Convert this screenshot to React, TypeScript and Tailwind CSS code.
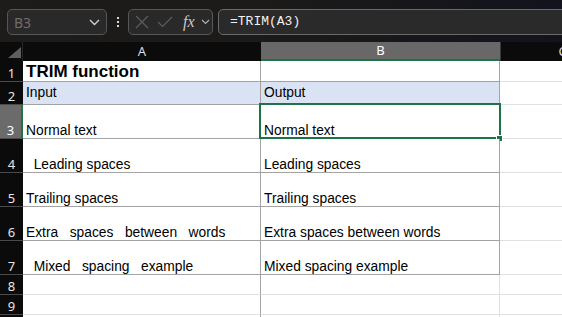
import React from "react";

const G = "border-[#a3a3a3]";
const L = "border-[#e1e1e1]";

type Row = {
  n: number;
  h: string;
  a: string;
  b: string;
  fill?: boolean;
  bold?: boolean;
  pb: string;
  gray: boolean;
};

const rows: Row[] = [
  { n: 1, h: "h-[21px]", a: "TRIM function", b: "", bold: true, pb: "pb-0", gray: true },
  { n: 2, h: "h-[23px]", a: "Input", b: "Output", fill: true, pb: "pb-[4px]", gray: true },
  { n: 3, h: "h-[34px]", a: "Normal text", b: "Normal text", pb: "pb-0", gray: true },
  { n: 4, h: "h-[34px]", a: "  Leading spaces", b: "Leading spaces", pb: "pb-0", gray: true },
  { n: 5, h: "h-[34px]", a: "Trailing spaces   ", b: "Trailing spaces", pb: "pb-0", gray: true },
  { n: 6, h: "h-[34px]", a: "Extra   spaces   between   words", b: "Extra spaces between words", pb: "pb-0", gray: true },
  { n: 7, h: "h-[34px]", a: "  Mixed   spacing   example", b: "Mixed spacing example", pb: "pb-0", gray: true },
  { n: 8, h: "h-[20px]", a: "", b: "", pb: "pb-0", gray: false },
  { n: 9, h: "h-[20px]", a: "", b: "", pb: "pb-0", gray: false },
  { n: 10, h: "h-[20px]", a: "", b: "", pb: "pb-0", gray: false },
];

const cellFont = { fontFamily: '"Liberation Sans", Arial, sans-serif' };
const uiFont = { fontFamily: '"Noto Sans", "Liberation Sans", sans-serif' };

export default function App() {
  return (
    <div className="w-[562px] h-[317px] overflow-hidden bg-white flex flex-col">
      {/* Top formula bar */}
      <div className="h-[42px] shrink-0 flex items-start pt-[9px] pl-[7px] bg-gradient-to-r from-[#1e1c1a] via-[#1b1a19] to-[#12131d] overflow-hidden">
        <div className="w-[100px] h-[26px] shrink-0 rounded-[5px] border border-[#575757] bg-[#292929] flex items-center justify-between pl-[6px] pr-[6px]">
          <span className="text-[14px] text-[#6e6e6e]" style={uiFont}>B3</span>
          <svg width="11" height="7" viewBox="0 0 11 7"><path d="M1 1l4.5 4.5L10 1" fill="none" stroke="#d0d0d0" strokeWidth="1.4" /></svg>
        </div>
        <div className="w-[21px] h-[26px] shrink-0 flex flex-col items-center justify-center gap-[2px]">
          <div className="w-[2px] h-[2px] bg-[#d8d8d8]" />
          <div className="w-[2px] h-[2px] bg-[#d8d8d8]" />
          <div className="w-[2px] h-[2px] bg-[#d8d8d8]" />
        </div>
        <div className="w-[85px] h-[26px] shrink-0 rounded-[5px] border border-[#575757] bg-[#292929] flex items-center pl-[6px]">
          <svg width="14" height="14" viewBox="0 0 14 14" className="shrink-0"><path d="M1 1l12 12M13 1L1 13" stroke="#5c5c5c" strokeWidth="1.2" /></svg>
          <svg width="16" height="12" viewBox="0 0 16 12" className="ml-[8px] shrink-0"><path d="M1 6l4.5 4.5L15 1" fill="none" stroke="#5c5c5c" strokeWidth="1.2" /></svg>
          <span className="ml-[10px] text-[16px] italic text-[#c8c8c8] leading-none" style={{ fontFamily: '"Liberation Serif", "DejaVu Serif", serif' }}>fx</span>
          <svg width="9" height="6" viewBox="0 0 9 6" className="ml-[6px] shrink-0"><path d="M1 1l3.5 3.5L8 1" fill="none" stroke="#b0b0b0" strokeWidth="1.2" /></svg>
        </div>
        <div className="w-[360px] h-[26px] shrink-0 ml-[5px] rounded-[5px] border border-[#6a6a6a] bg-[#2a2a2a] flex items-center pl-[11px]">
          <span className="text-[13px] text-[#f0f0f0]" style={{ fontFamily: '"Liberation Mono", "DejaVu Sans Mono", monospace' }}>=TRIM(A3)</span>
        </div>
      </div>

      {/* Column headers */}
      <div className="h-[19px] shrink-0 flex bg-[#0b0b0b]" style={uiFont}>
        <div className="w-[23px] shrink-0 relative border-r border-[#262626]">
          <svg width="14" height="11" viewBox="0 0 14 11" className="absolute left-[8px] top-[5px]"><path d="M13 0V11H0Z" fill="#5e5e5e" /></svg>
        </div>
        <div className="w-[238px] shrink-0 flex items-center justify-center pt-[1px] text-[13px] text-[#dcdcdc]">A</div>
        <div className="w-[239px] shrink-0 flex items-center justify-center pt-[1px] text-[13px] text-white bg-[#686868] border-b-2 border-[#1f7246]">B</div>
        <div className="w-[124px] shrink-0 flex items-center justify-center pt-[1px] text-[13px] text-[#dcdcdc] border-l border-[#3a3a3a]">C</div>
      </div>

      {/* Grid */}
      <div className="flex flex-col shrink-0" style={cellFont}>
        {rows.map((r) => (
          <div key={r.n} className={`flex shrink-0 ${r.h}`}>
            <div
              className={`w-[23px] shrink-0 flex items-end justify-center text-[13px] border-b border-[#4a4a4a] ${
                r.n === 3 ? "bg-[#6b6b6b] text-white border-r-2 border-r-[#1f7246]" : "bg-[#0b0b0b] text-[#e6e6e6]"
              }`}
              style={uiFont}
            >
              <span className="leading-[15px]">{r.n}</span>
            </div>
            <div
              className={`w-[238px] shrink-0 flex items-end pl-[3px] ${r.pb} border-r border-b ${r.gray ? G : L} ${r.n >= 8 ? "border-r-[#a3a3a3]" : ""} ${
                r.fill ? "bg-[#dae3f3]" : "bg-white"
              }`}
            >
              <span className={`whitespace-pre text-black ${r.bold ? "text-[17px] font-bold leading-[18px]" : "text-[13.8px] leading-[14px]"}`}>{r.a}</span>
            </div>
            <div
              className={`w-[239px] shrink-0 relative flex items-end pl-[3px] ${r.pb} border-r border-b ${r.gray ? G : L} ${
                r.fill ? "bg-[#dae3f3]" : "bg-white"
              }`}
            >
              <span className="whitespace-pre text-black text-[13.8px] leading-[14px]">{r.b}</span>
              {r.n === 3 && (
                <>
                  <div className="absolute left-[-2px] top-[-2px] right-[-2px] bottom-[-1px] border-2 border-[#1f7246] pointer-events-none" />
                  <div className="absolute right-[-4px] bottom-[-4px] w-[7px] h-[7px] bg-[#1f7246] border border-white" />
                </>
              )}
            </div>
            <div className={`w-[124px] shrink-0 border-r border-b ${L} bg-white`} />
          </div>
        ))}
      </div>
    </div>
  );
}
